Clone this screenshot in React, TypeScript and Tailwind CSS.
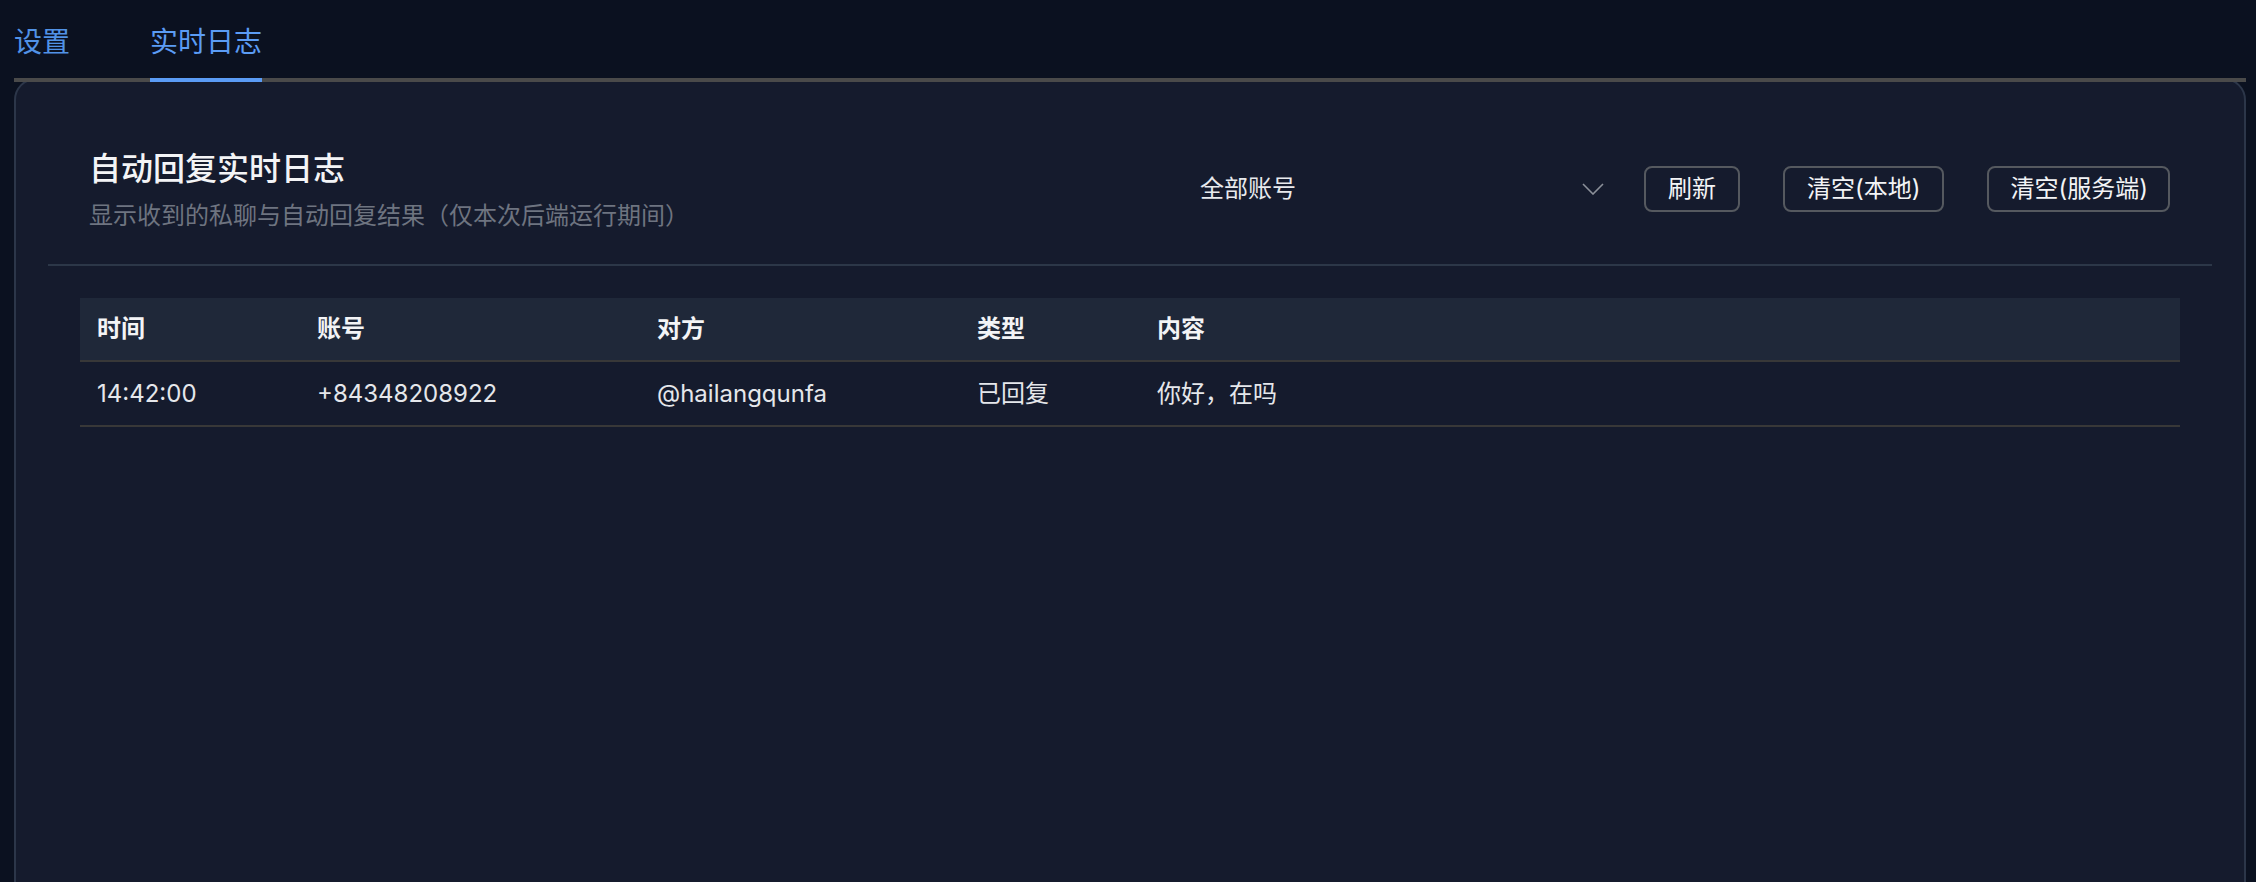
import { useState } from 'react';

interface LogRow {
  time: string;
  account: string;
  peer: string;
  kind: string;
  content: string;
}

const rows: LogRow[] = [
  {
    time: '14:42:00',
    account: '+84348208922',
    peer: '@hailangqunfa',
    kind: '已回复',
    content: '你好，在吗',
  },
];

export default function App() {
  const [tab, setTab] = useState('logs');

  return (
    <div className="flex h-screen flex-col overflow-hidden bg-[#0b1120] pl-[14px] pr-[10px] font-['Inter','Noto_Sans_CJK_SC',sans-serif] text-[24px] text-[#e5e7eb]">
      {/* Tabs */}
      <div className="relative z-10 -mb-[4px] flex gap-[80px] border-b-4 border-[#4a4a4a]">
        <button
          type="button"
          onClick={() => setTab('settings')}
          className={`-mb-[4px] border-b-4 pt-[28px] pb-[22px] text-[28px] leading-[28px] ${
            tab === 'settings' ? 'border-[#5b9cf5] text-[#5b9cf5]' : 'border-transparent text-[#5192e6]'
          }`}
        >
          设置
        </button>
        <button
          type="button"
          onClick={() => setTab('logs')}
          className={`-mb-[4px] border-b-4 pt-[28px] pb-[22px] text-[28px] leading-[28px] ${
            tab === 'logs' ? 'border-[#5b9cf5] text-[#5b9cf5]' : 'border-transparent text-[#5192e6]'
          }`}
        >
          实时日志
        </button>
      </div>

      {/* Card */}
      <div className="min-h-[900px] shrink-0 rounded-[22px] border-2 border-[#2c3649] bg-[#151b2d] px-[32px]">
        <div className="flex items-center justify-between border-b-2 border-[#2c3748] pt-[73px] pb-[36px] pl-[41px] pr-[42px]">
          <div>
            <h2 className="text-[32px] font-medium leading-[32px] text-[#f3f4f6]">自动回复实时日志</h2>
            <p className="mt-[19px] text-[24px] leading-[24px] text-[#6e7480]">
              显示收到的私聊与自动回复结果（仅本次后端运行期间）
            </p>
          </div>

          <div className="mb-[3px] flex items-center">
            <div className="mr-[25px] flex w-[435px] cursor-pointer items-center justify-between pl-[16px] pr-[15px] text-[#e8eaed]">
              <span className="leading-[46px]">全部账号</span>
              <svg viewBox="0 0 22 12" className="h-[12px] w-[22px]" fill="none" stroke="#8b9099" strokeWidth="1.6">
                <path d="M1 1 L11 11 L21 1" />
              </svg>
            </div>
            <div className="flex items-center gap-[43px]">
              <button type="button" className="h-[46px] rounded-[8px] border-2 border-[#55595f] px-[22px] leading-[42px] text-[#f3f4f6]">
                刷新
              </button>
              <button type="button" className="h-[46px] rounded-[8px] border-2 border-[#55595f] px-[22px] leading-[42px] text-[#f3f4f6]">
                清空(本地)
              </button>
              <button type="button" className="h-[46px] rounded-[8px] border-2 border-[#55595f] pl-[21px] pr-[20px] leading-[42px] text-[#f3f4f6]">
                清空(服务端)
              </button>
            </div>
          </div>
        </div>

        <div className="p-[32px]">
          <table className="w-full table-fixed border-collapse text-left">
            <colgroup>
              <col className="w-[220px]" />
              <col className="w-[340px]" />
              <col className="w-[320px]" />
              <col className="w-[180px]" />
              <col />
            </colgroup>
            <thead>
              <tr className="h-[63px] border-b-2 border-[#383838] bg-[#1f2839]">
                <th className="pl-[17px] font-semibold text-[#f3f4f6]">时间</th>
                <th className="pl-[17px] font-semibold text-[#f3f4f6]">账号</th>
                <th className="pl-[17px] font-semibold text-[#f3f4f6]">对方</th>
                <th className="pl-[17px] font-semibold text-[#f3f4f6]">类型</th>
                <th className="pl-[17px] font-semibold text-[#f3f4f6]">内容</th>
              </tr>
            </thead>
            <tbody>
              {rows.map((r) => (
                <tr key={r.time + r.peer} className="h-[65px] border-b-2 border-[#383838]">
                  <td className="pl-[17px]">{r.time}</td>
                  <td className="pl-[17px]">{r.account}</td>
                  <td className="pl-[17px]">{r.peer}</td>
                  <td className="pl-[17px]">{r.kind}</td>
                  <td className="pl-[17px]">{r.content}</td>
                </tr>
              ))}
            </tbody>
          </table>
        </div>
      </div>
    </div>
  );
}
